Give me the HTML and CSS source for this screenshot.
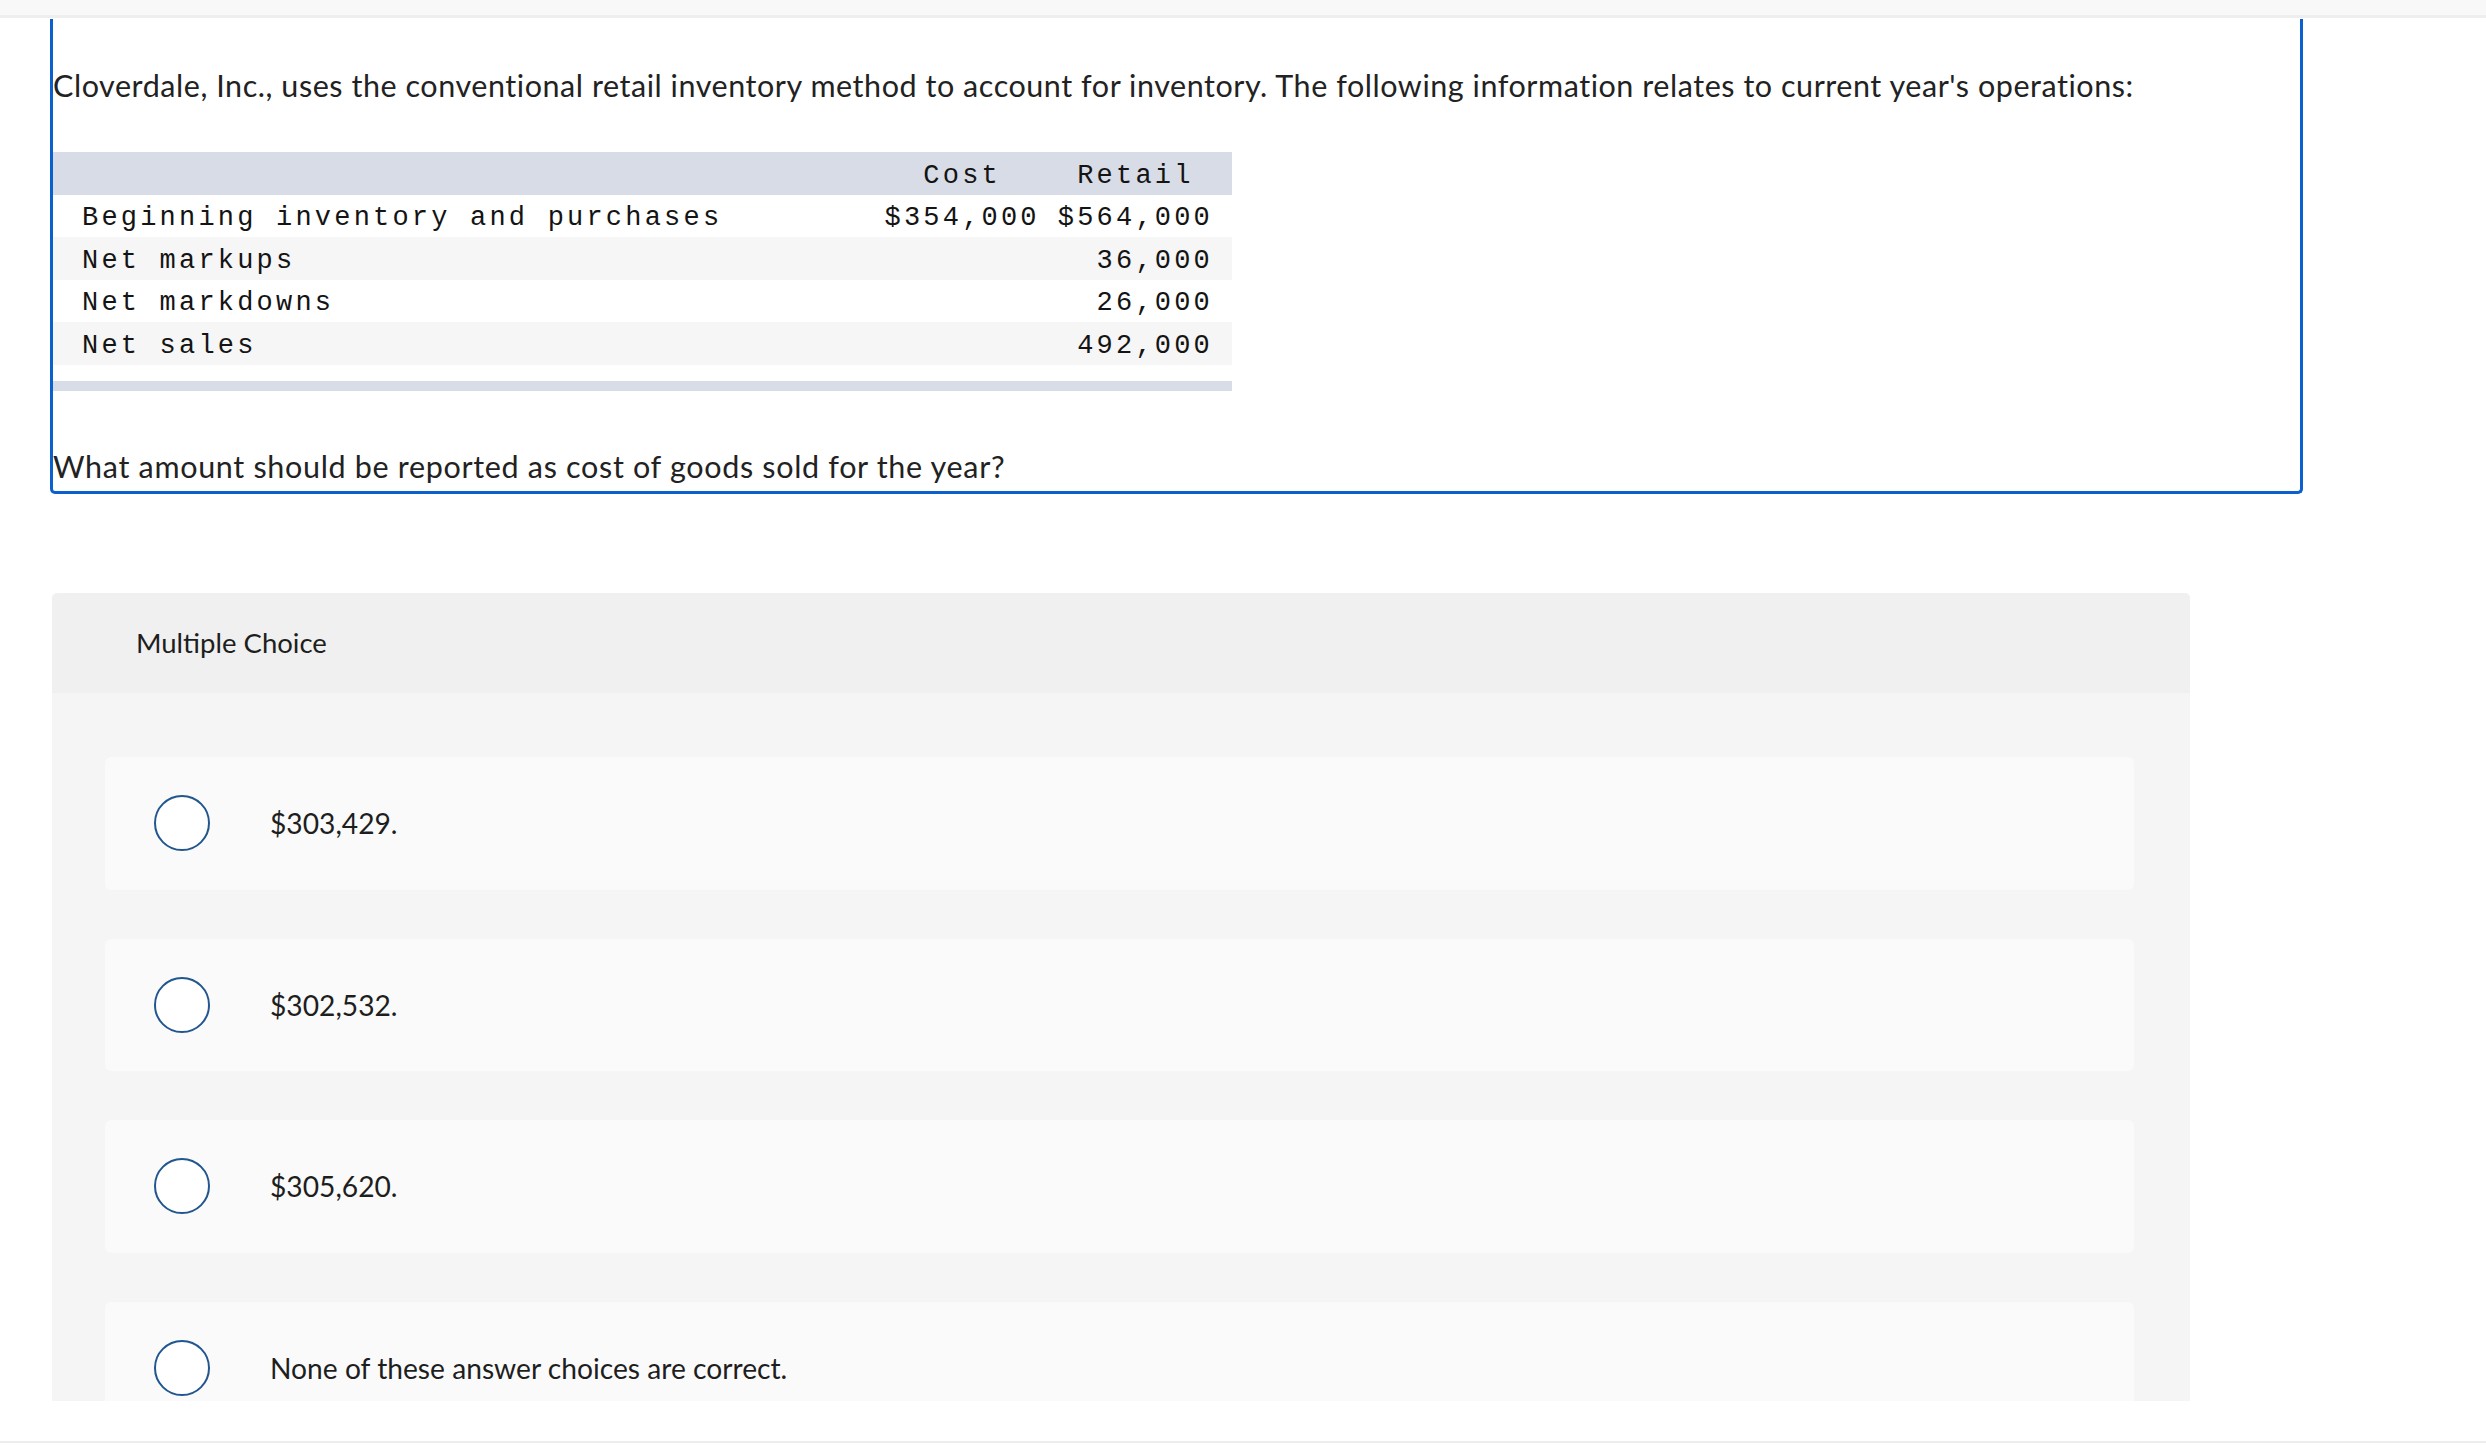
FILE: index.html
```html
<!DOCTYPE html>
<html>
<head>
<meta charset="utf-8">
<title>Question</title>
<link rel="stylesheet" href="styles.css">
</head>
<body>
<div class="topbar"></div>
<div class="scroll">
  <div class="question-box">
    <p class="intro">Cloverdale, Inc., uses the conventional retail inventory method to account for inventory. The following information relates to current year's operations:</p>
    <table class="data">
      <thead>
        <tr class="head-row"><th class="label"></th><th class="num">Cost</th><th class="num last">Retail</th></tr>
      </thead>
      <tbody>
        <tr class="r-even"><td class="label">Beginning inventory and purchases</td><td class="num">$354,000</td><td class="num last">$564,000</td></tr>
        <tr class="r-odd alt"><td class="label">Net markups</td><td class="num"></td><td class="num last">36,000</td></tr>
        <tr class="r-even"><td class="label">Net markdowns</td><td class="num"></td><td class="num last">26,000</td></tr>
        <tr class="r-odd alt"><td class="label">Net sales</td><td class="num"></td><td class="num last">492,000</td></tr>
        <tr class="spacer"><td colspan="3"></td></tr>
      </tbody>
      <tfoot>
        <tr class="foot-row"><td colspan="3"></td></tr>
      </tfoot>
    </table>
    <p class="prompt">What amount should be reported as cost of goods sold for the year?</p>
  </div>

  <div class="mc">
    <div class="mc-head">Multiple Choice</div>
    <div class="mc-body">
      <div class="choice"><span class="radio"></span><span class="choice-text">$303,429.</span></div>
      <div class="choice"><span class="radio"></span><span class="choice-text">$302,532.</span></div>
      <div class="choice"><span class="radio"></span><span class="choice-text">$305,620.</span></div>
      <div class="choice"><span class="radio"></span><span class="choice-text">None of these answer choices are correct.</span></div>
    </div>
  </div>
</div>
<div class="footer"></div>
</body>
</html>
```

FILE: styles.css
```css
html, body {
  margin: 0;
  padding: 0;
  background: #ffffff;
}

body {
  width: 2486px;
  height: 1450px;
  overflow: hidden;
  font-family: Lato, "Open Sans", sans-serif;
  color: #222222;
}

.topbar {
  height: 15px;
  background: #f8f8f8;
  border-bottom: 3px solid #eeeeee;
}

.scroll {
  height: 1383px;
  overflow: hidden;
  box-sizing: border-box;
  padding-top: 1px;
  padding-left: 50px;
}

.question-box {
  width: 2253px;
  box-sizing: border-box;
  border: 3px solid #0b5fcf;
  border-top: none;
  border-radius: 0 0 5px 5px;
  padding: 46px 0 5px 0;
}

.intro {
  margin: 0;
  font-size: 30.5px;
  letter-spacing: 0.55px;
  line-height: 40px;
  white-space: nowrap;
}

.data {
  margin-top: 47px;
  width: 1179px;
  border-collapse: collapse;
  font-family: "Liberation Mono", "DejaVu Sans Mono", monospace;
  font-size: 27px;
  letter-spacing: 3.2px;
  color: #141414;
}

.data th,
.data td {
  padding: 4px 0 0 0;
  line-height: 30px;
  vertical-align: middle;
  font-weight: normal;
}

.head-row {
  height: 43px;
  background: #d8dce6;
}

.r-even {
  height: 42px;
}

.r-odd {
  height: 43px;
}

.alt {
  background: #f6f6f6;
}

.spacer {
  height: 16px;
}

.spacer td {
  padding: 0;
}

.foot-row {
  height: 10px;
  background: #d8dce6;
}

.foot-row td {
  padding: 0;
}

.data .label {
  padding-left: 29px;
  text-align: left;
}

.data .num {
  width: 1px;
  white-space: nowrap;
  text-align: right;
  padding-left: 12px;
  padding-right: 6px;
}

.data th.num {
  text-align: center;
}

.data .last {
  padding-right: 19px;
}

.prompt {
  margin: 55px 0 0 0;
  font-size: 30.5px;
  letter-spacing: 0.68px;
  line-height: 40px;
  white-space: nowrap;
}

.mc {
  margin-top: 99px;
  margin-left: 2px;
  width: 2138px;
  border-radius: 5px 5px 0 0;
  overflow: hidden;
}

.mc-head {
  height: 100px;
  line-height: 100px;
  padding-left: 84px;
  background: #f0f0f0;
  font-size: 27.5px;
  color: #1e1e1e;
}

.mc-body {
  background: #f5f5f5;
  padding: 64px 56px 60px 53px;
  display: flex;
  flex-direction: column;
  gap: 49px;
}

.choice {
  height: 132.5px;
  background: #fafafa;
  border-radius: 6px;
  display: flex;
  align-items: center;
  padding-left: 49px;
}

.radio {
  width: 56px;
  height: 56px;
  box-sizing: border-box;
  border: 2.5px solid #21568f;
  border-radius: 50%;
  background: #ffffff;
  flex: none;
}

.choice-text {
  margin-left: 60px;
  font-size: 28.2px;
  color: #1e1e1e;
}

.footer {
  margin-top: 40px;
  height: 7px;
  border-top: 2px solid #ededed;
}
```
